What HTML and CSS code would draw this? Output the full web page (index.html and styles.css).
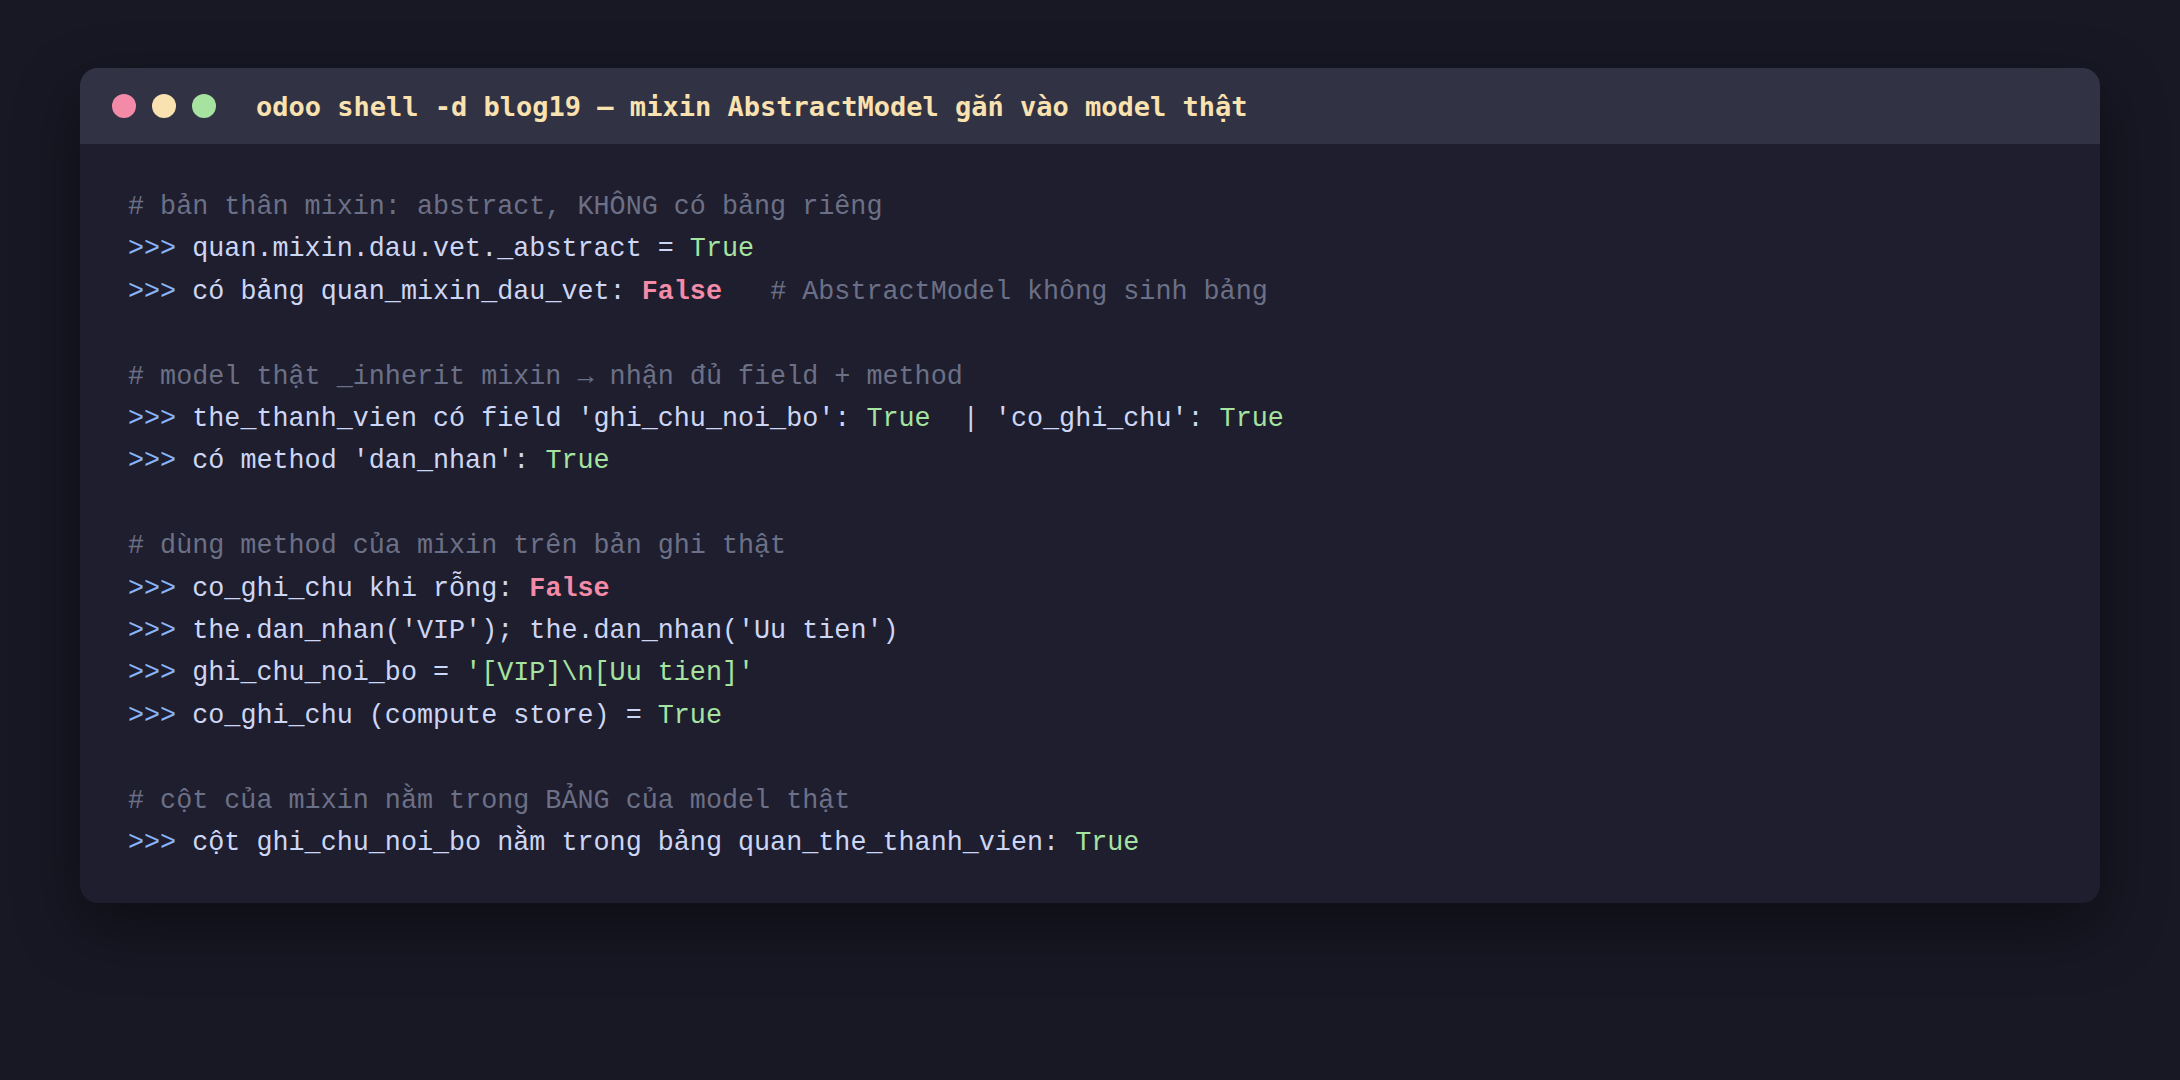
FILE: index.html
```html
<!DOCTYPE html>
<html lang="vi">
<head>
<meta charset="utf-8">
<title>odoo shell</title>
<link rel="stylesheet" href="styles.css">
</head>
<body>
<div class="page">
  <div class="window">
    <div class="titlebar">
      <div class="dots">
        <span class="dot red"></span>
        <span class="dot yellow"></span>
        <span class="dot green"></span>
      </div>
      <div class="title">odoo shell -d blog19 — mixin AbstractModel g&#x1EAF;n vào model th&#x1EAD;t</div>
    </div>
    <div class="body">
<pre class="code"><span class="c"># bản thân mixin: abstract, KHÔNG có bảng riêng</span>
<span class="p">&gt;&gt;&gt;</span> quan.mixin.dau.vet._abstract = <span class="t">True</span>
<span class="p">&gt;&gt;&gt;</span> có bảng quan_mixin_dau_vet: <span class="f">False</span>   <span class="c"># AbstractModel không sinh bảng</span>

<span class="c"># model thật _inherit mixin → nhận đủ field + method</span>
<span class="p">&gt;&gt;&gt;</span> the_thanh_vien có field 'ghi_chu_noi_bo': <span class="t">True</span>  | 'co_ghi_chu': <span class="t">True</span>
<span class="p">&gt;&gt;&gt;</span> có method 'dan_nhan': <span class="t">True</span>

<span class="c"># dùng method của mixin trên bản ghi thật</span>
<span class="p">&gt;&gt;&gt;</span> co_ghi_chu khi rỗng: <span class="f">False</span>
<span class="p">&gt;&gt;&gt;</span> the.dan_nhan('VIP'); the.dan_nhan('Uu tien')
<span class="p">&gt;&gt;&gt;</span> ghi_chu_noi_bo = <span class="t">'[VIP]\n[Uu tien]'</span>
<span class="p">&gt;&gt;&gt;</span> co_ghi_chu (compute store) = <span class="t">True</span>

<span class="c"># cột của mixin nằm trong BẢNG của model thật</span>
<span class="p">&gt;&gt;&gt;</span> cột ghi_chu_noi_bo nằm trong bảng quan_the_thanh_vien: <span class="t">True</span></pre>
    </div>
  </div>
</div>
</body>
</html>
```

FILE: styles.css
```css
html, body {
  margin: 0;
  padding: 0;
  background: #181825;
}

body {
  width: 2180px;
  height: 1080px;
  overflow: hidden;
}

.page {
  padding: 68px 80px 0 80px;
}

.window {
  background: #1e1e2e;
  border-radius: 18px;
  overflow: hidden;
  box-shadow: 0 24px 64px rgba(0, 0, 0, 0.45);
}

.titlebar {
  height: 76px;
  background: #313244;
  display: flex;
  align-items: center;
  padding-left: 32px;
}

.dots {
  display: flex;
  gap: 16px;
}

.dot {
  width: 24px;
  height: 24px;
  border-radius: 50%;
  display: block;
}

.dot.red { background: #f38ba8; }
.dot.yellow { background: #f9e2af; }
.dot.green { background: #a6e3a1; }

.title {
  margin-left: 40px;
  font-family: "DejaVu Sans Mono", monospace;
  font-weight: bold;
  font-size: 27px;
  color: #f9e2af;
  white-space: pre;
}

.body {
  padding: 42px 48px 38px 48px;
}

.code {
  margin: 0;
  font-family: "Courier New", Courier, "Nimbus Mono PS", "Nimbus Mono L", FreeMono, "Liberation Mono", monospace;
  font-size: 26.75px;
  line-height: 42.4px;
  color: #cdd6f4;
  white-space: pre;
}

.c { color: #6c7086; }
.p { color: #89b4fa; }
.t { color: #a6e3a1; }
.f { color: #f38ba8; font-weight: bold; }
```
